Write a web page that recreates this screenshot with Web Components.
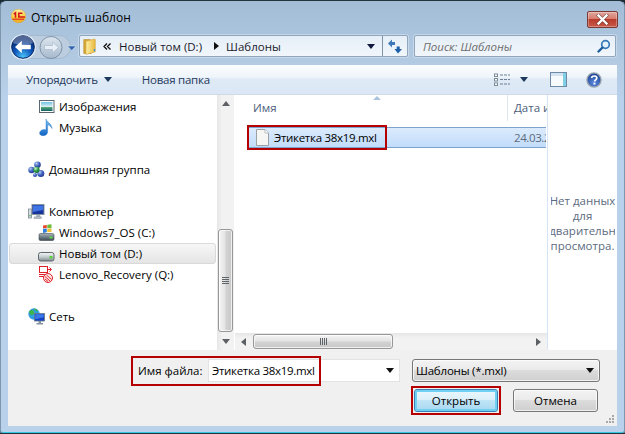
<!DOCTYPE html>
<html>
<head>
<meta charset="utf-8">
<title>Открыть шаблон</title>
<style>
  html, body { margin: 0; padding: 0; background: #1b2a33; }
</style>
</head>
<body>
<open-dialog>
  <dlg-titlebar slot="title">Открыть шаблон</dlg-titlebar>
  <dlg-navbar slot="nav"></dlg-navbar>
  <dlg-toolbar slot="tools"></dlg-toolbar>
  <nav-tree slot="tree">
    <tree-item level="2"><svg slot="icon" width="17" height="15" viewBox="0 0 17 15"><defs><linearGradient id="pic" x1="0" y1="0" x2="0" y2="1"><stop offset="0" stop-color="#6fbfe4"/><stop offset=".5" stop-color="#d8f0f4"/><stop offset=".58" stop-color="#58a878"/><stop offset="1" stop-color="#0f6468"/></linearGradient></defs><rect x="1.500" y="1.500" width="14.500" height="12" fill="#fff" stroke="#5c6670"/><rect x="3" y="3" width="11.500" height="9" fill="url(#pic)"/></svg>Изображения</tree-item>
    <tree-item level="2"><svg slot="icon" width="17" height="17" viewBox="0 0 17 17"><defs><linearGradient id="nt" x1="0" y1="0" x2="0" y2="1"><stop offset="0" stop-color="#7cc6f4"/><stop offset="1" stop-color="#0f62c4"/></linearGradient></defs><path d="M8 0c.3 3 5.500 4 6 9.500-1-2.300-3.200-3.500-4.400-3.700V13c0 2.200-2.200 3.800-4.600 3.800-1.900 0-3.400-1-3.400-2.700 0-2 2.300-3.600 4.600-3.600.8 0 1.400.2 1.800.4z" fill="url(#nt)" stroke="#1a6cc4" stroke-width=".4"/></svg>Музыка</tree-item>
    <tree-item level="1" class="gap"><svg slot="icon" width="17" height="17" viewBox="0 0 17 17"><defs><radialGradient id="sb" cx=".35" cy=".3" r=".8"><stop offset="0" stop-color="#b8cdf4"/><stop offset=".5" stop-color="#3f62c0"/><stop offset="1" stop-color="#1b2f80"/></radialGradient><radialGradient id="sg" cx=".35" cy=".3" r=".8"><stop offset="0" stop-color="#c4f0c4"/><stop offset=".5" stop-color="#2fa048"/><stop offset="1" stop-color="#0f6428"/></radialGradient></defs><circle cx="3.500" cy="9" r="3.200" fill="url(#sb)"/><circle cx="9.500" cy="3.800" r="3.300" fill="url(#sb)"/><circle cx="12.800" cy="12.600" r="3.500" fill="url(#sb)"/><circle cx="7" cy="14" r="2" fill="url(#sb)"/><circle cx="8.500" cy="8.800" r="3.100" fill="url(#sg)"/></svg>Домашняя группа</tree-item>
    <tree-item level="1" class="gap"><svg slot="icon" width="17" height="17" viewBox="0 0 17 17"><rect x=".5" y="6" width="3" height="9" fill="#d4dbe1" stroke="#6f7c88" stroke-width=".7"/><rect x="1.300" y="12" width="1.400" height="1.400" fill="#48b848"/><rect x="4" y="1.500" width="12" height="10" fill="#17349c" stroke="#8592a0"/><path d="M5 2.500h10v4.500L5 9z" fill="#3f74e4"/><path d="M8.500 12h3.500l.8 2H7.700z" fill="#a9b4be"/><rect x="6" y="14" width="7.500" height="1.500" fill="#c8d0d8" stroke="#7c8894" stroke-width=".5"/></svg>Компьютер</tree-item>
    <tree-item level="2"><svg slot="icon" width="17" height="17" viewBox="0 0 17 17"><defs><linearGradient id="hw" x1="0" y1="0" x2="0" y2="1"><stop offset="0" stop-color="#a8b4bc"/><stop offset=".45" stop-color="#74838c"/><stop offset="1" stop-color="#3f4c54"/></linearGradient></defs><rect x="1" y="9.500" width="15" height="7" rx="1.500" fill="url(#hw)" stroke="#3f4a52" stroke-width=".6"/><rect x="11.500" y="12.500" width="3" height="2" fill="#62d24c"/><path d="M5 1.500l3.800-.6v3.400H5z" fill="#e5482c"/><path d="M9.300 .8l4.200-.6v4H9.300z" fill="#6fbb3a"/><path d="M5 4.800h3.800v3.500L5 8.900z" fill="#2f7fe0"/><path d="M9.300 4.800h4.200v3l-4.200.5z" fill="#f2c22c"/></svg>Windows7_OS (C:)</tree-item>
    <tree-item level="2" selected><svg slot="icon" width="17" height="17" viewBox="0 0 17 17"><defs><linearGradient id="hd" x1="0" y1="0" x2="0" y2="1"><stop offset="0" stop-color="#f4f6f6"/><stop offset=".5" stop-color="#c6ced0"/><stop offset="1" stop-color="#7f8a8e"/></linearGradient></defs><rect x=".5" y="7.500" width="15.500" height="8.500" rx="2.200" fill="url(#hd)" stroke="#5f686c"/><rect x="11.500" y="11" width="3" height="2.500" fill="#5ad03c"/></svg>Новый том (D:)</tree-item>
    <tree-item level="2"><svg slot="icon" width="17" height="17" viewBox="0 0 17 17" fill="none" stroke="#de2028"><rect x="1.500" y=".5" width="8" height="6" fill="#fff"/><path d="M1 8.500h10M1 10.500h7"/><path d="M9.500 3.500h3.500M11.500 1.500l2 2-2 2"/><circle cx="10" cy="12" r="4.500" fill="#fde8e8"/><path d="M7 10.500l5 4.500M8.500 9l5 4.500M7 13l3 2.500"/></svg>Lenovo_Recovery (Q:)</tree-item>
    <tree-item level="1" class="gap"><svg slot="icon" width="17" height="17" viewBox="0 0 17 17"><circle cx="6" cy="6" r="5.700" fill="#2f9ee0"/><path d="M1.500 3C3 1.500 5 2 6 3.500S5 7 3.500 7 .800 4.500 1.500 3zM6 .6c2 0 3.500 1 3.800 2.300S7 3 6 .6z" fill="#3db548"/><rect x="6.500" y="5.500" width="10" height="7.500" fill="#1241c8" stroke="#6a7a88" stroke-width=".8"/><path d="M7.300 6.300h8.400v3l-8.400 2z" fill="#3a78e8"/><path d="M10.500 13h2.500v2h2v1.500H8.500V15h2z" fill="#8795a2"/></svg>Сеть</tree-item>
  </nav-tree>
  <scroll-bar slot="treescroll" orient="v" before="117" size="103"></scroll-bar>
  <file-list slot="files"></file-list>
  <preview-pane slot="preview">Нет данных<br>для<br>дварительн<br>просмотра.</preview-pane>
  <dlg-footer slot="footer"></dlg-footer>
</open-dialog>

<script>
const FONT = '"Open Sans", "Noto Sans", sans-serif';

class OpenDialog extends HTMLElement {
  connectedCallback() {
    this.attachShadow({ mode: 'open' }).innerHTML = `
    <style>
      :host {
        display: flex; flex-direction: column; box-sizing: border-box;
        width: 625px; height: 434px; padding: 0 7px 6px;
        border: 1px solid #22353f; border-left-color: #7f97ac; border-right-color: #7f97ac;
        border-radius: 6px 6px 3px 3px;
        box-shadow: inset 0 -1px 0 #35c8e0;
        background: linear-gradient(#a3bdd7 0, #b2cae2 60px, #b9d1ea 100px, #b9d1ea 100%);
        font: 11.5px ${FONT}; color: #000;
      }
      .content {
        display: grid; grid-template-columns: 209px 17px 1px 312px 1px 69px;
        height: 255px; background: #fff;
      }
      .line { background: #fff; }
      .split { background: #d6e5f5; }
    </style>
    <slot name="title"></slot>
    <slot name="nav"></slot>
    <slot name="tools"></slot>
    <div class="content">
      <slot name="tree"></slot>
      <slot name="treescroll"></slot>
      <div class="line"></div>
      <slot name="files"></slot>
      <div class="split"></div>
      <slot name="preview"></slot>
    </div>
    <slot name="footer"></slot>`;
  }
}

class DlgTitlebar extends HTMLElement {
  connectedCallback() {
    this.attachShadow({ mode: 'open' }).innerHTML = `
    <style>
      :host { display: flex; align-items: center; height: 30px; padding-left: 3px; font-size: 12px; }
      svg { margin-right: 5px; }
      .label { flex: 1; padding-top: 2px; }
      .close {
        display: flex; align-items: center; justify-content: center;
        box-sizing: border-box; width: 31px; height: 17px; margin: 6px -1px 0 0;
        border: 1px solid #7a3a34; border-radius: 2px;
        background: linear-gradient(#e0a79e 0, #d87c6e 45%, #b83c2c 50%, #c85a48 100%);
        box-shadow: inset 0 0 0 1px rgba(255,255,255,.3);
      }
    </style>
    <svg width="15" height="14" viewBox="0 0 15 14">
      <defs><linearGradient id="oc" x1="0" y1="0" x2="0" y2="1"><stop offset="0" stop-color="#fff2a8"/><stop offset=".6" stop-color="#f8cc3c"/><stop offset="1" stop-color="#f0a820"/></linearGradient></defs>
      <ellipse cx="7.500" cy="7" rx="7.300" ry="6.800" fill="url(#oc)" stroke="#dca428" stroke-width=".5"/>
      <path d="M2.700 5.200l1.800-1.400v5" fill="none" stroke="#d8141c" stroke-width="1.500"/>
      <path d="M11.500 4.300H7.800v3.800H14" fill="none" stroke="#d8141c" stroke-width="1.500"/>
      <path d="M1.500 10.200h11.500" stroke="#d8141c" stroke-width="1"/>
    </svg>
    <span class="label"><slot></slot></span>
    <div class="close">
      <svg style="margin:0" width="13" height="11" viewBox="0 0 13 11"><path d="M2.500 1.500l8 8M10.500 1.500l-8 8" stroke="#4b2a28" stroke-width="3.600" stroke-linecap="square" opacity=".6"/><path d="M2.500 1.500l8 8M10.500 1.500l-8 8" stroke="#fff" stroke-width="2.400" stroke-linecap="square"/></svg>
    </div>`;
  }
}

class DlgNavbar extends HTMLElement {
  connectedCallback() {
    this.attachShadow({ mode: 'open' }).innerHTML = `
    <style>
      :host { display: flex; align-items: flex-start; height: 34px; margin-left: 1px; color: #1a1a2a; }
      .nav { margin-top: 1px; width: 70px; height: 30px; flex: none; }
      .box {
        display: flex; align-items: center; box-sizing: border-box; height: 22px; margin-top: 4px;
        background: linear-gradient(rgba(236,243,250,.9), rgba(246,250,253,.92));
        border: 1px solid #8fa6bd; border-radius: 2px;
        box-shadow: 0 0 0 1px rgba(255,255,255,.3);
      }
      .addr { width: 329px; padding-left: 3px; }
      .addr svg { flex: none; }
      .chev { margin: 0 8px 0 7px; width: 8px; }
      .tri { margin: 0 7px 0 12px; }
      .space { flex: 1; }
      .sep { width: 1px; align-self: stretch; background: #7f93a8; margin-left: 7px; }
      .refresh { width: 24px; display: flex; justify-content: center; }
      .search { width: 202px; margin-left: 6px; padding: 0 4px 0 8px; color: #6d6d6d; font-style: italic; }
      .search span { flex: 1; }
    </style>
    <svg class="nav" viewBox="0 0 70 30">
      <defs>
        <radialGradient id="bk" cx=".5" cy=".95" r=".85"><stop offset="0" stop-color="#4cc8fa"/><stop offset=".5" stop-color="#0f56bc"/><stop offset="1" stop-color="#062468"/></radialGradient>
        <linearGradient id="fw" x1="0" y1="0" x2="0" y2="1"><stop offset="0" stop-color="#dde6ef"/><stop offset="1" stop-color="#a6b9cd"/></linearGradient>
      </defs>
      <path d="M14 3.500h36a11.500 11.500 0 0 1 0 23H14z" fill="#bccde0" stroke="#9bb0c5" stroke-width=".6"/>
      <circle cx="14" cy="15" r="13" fill="#e8f1fa" opacity=".75"/>
      <circle cx="14" cy="15" r="11.300" fill="url(#bk)" stroke="#0a2a68"/>
      <path d="M4 11a10 7.500 0 0 1 20 0c-4 2-16 2-20 0z" fill="#fff" opacity=".3"/>
      <path d="M6 15l6.800-6.200v4h9v4.400h-9v4z" fill="#fff"/>
      <circle cx="42" cy="15.500" r="11" fill="url(#fw)" stroke="#7f93a8"/>
      <path d="M49.500 15.500l-6-5.400v3.400h-8v4h8v3.400z" fill="#e8eff6" stroke="#a4b6c8" stroke-width=".6"/>
      <path d="M58.500 14h8.500l-4.250 4.500z" fill="#2f62ac" stroke="#d8e6f4" stroke-width=".6"/>
    </svg>
    <div class="box addr">
      <svg width="13" height="17" viewBox="0 0 13 17"><defs><linearGradient id="fd" x1="0" y1="0" x2="1" y2="0"><stop offset="0" stop-color="#fff0a8"/><stop offset="1" stop-color="#e8b83c"/></linearGradient></defs><path d="M.7 1.500h6.500l1 1v13H.7z" fill="#d8a838" stroke="#b08428" stroke-width=".5"/><path d="M3 3.300l8.500-2.300.8.500v12.300l-9.300 2.700z" fill="url(#fd)" stroke="#c8982c" stroke-width=".5"/><rect x="10.800" y="11" width="1.300" height="2.200" fill="#3a8fd8"/></svg>
      <svg class="chev" width="8" height="7" viewBox="0 0 8 7"><path d="M4 .5L1 3.500l3 3M7.500 .5l-3 3 3 3" fill="none" stroke="#111" stroke-width="1.300"/></svg>
      <span>Новый том (D:)</span>
      <svg class="tri" width="5" height="8" viewBox="0 0 5 8"><path d="M0 0l5 4-5 4z" fill="#111"/></svg>
      <span>Шаблоны</span>
      <span class="space"></span>
      <svg width="8" height="5" viewBox="0 0 8 5"><path d="M0 0h8L4 5z" fill="#101840"/></svg>
      <div class="sep"></div>
      <div class="refresh"><svg width="16" height="15" viewBox="0 0 16 15"><path d="M1 4.500l4-4v2.500h3v3H5v2.500z" fill="#3f78b8"/><path d="M15 10l-4 4.500-3.500-4.500h2.200V7.500h3V10z" fill="#1f5fa8"/></svg></div>
    </div>
    <div class="box search">
      <span>Поиск: Шаблоны</span>
      <svg width="14" height="14" viewBox="0 0 14 14"><circle cx="8.500" cy="5.500" r="3.800" fill="#e6f2fb" stroke="#3779b8" stroke-width="1.700"/><path d="M5.500 8.500L1.500 12.500" stroke="#1f5d9c" stroke-width="2.400" stroke-linecap="round"/></svg>
    </div>`;
  }
}

class DlgToolbar extends HTMLElement {
  connectedCallback() {
    this.attachShadow({ mode: 'open' }).innerHTML = `
    <style>
      :host {
        display: flex; align-items: center; height: 30px; padding-left: 18px; flex: none; box-sizing: border-box;
        background: linear-gradient(#fbfdfe 0, #eff5fb 40%, #dfeaf6 50%, #dbe7f5 100%);
        border-bottom: 1px solid #cfdbe9; color: #1e395b;
      }
      .tight { letter-spacing: -.25px; }
      .arr { margin: 0 30px 0 6px; }
      .space { flex: 1; }
      svg { flex: none; }
    </style>
    <span class="tight">Упорядочить</span>
    <svg class="arr" width="8" height="5" viewBox="0 0 8 5"><path d="M0 0h8L4 5z" fill="#1e395b"/></svg>
    <span class="tight">Новая папка</span>
    <span class="space"></span>
    <svg width="16" height="13" viewBox="0 0 16 13" fill="none"><rect x=".5" y="1" width="3" height="2.500" fill="#fff" stroke="#7d8a98"/><rect x=".5" y="5.500" width="3" height="2.500" fill="#fff" stroke="#7d8a98"/><rect x=".5" y="10" width="3" height="2.500" fill="#fff" stroke="#7d8a98"/><path d="M6 2h10M6 6.500h10M6 11h10" stroke="#6c7e92" stroke-dasharray="3 1"/></svg>
    <svg style="margin:0 22px 0 10px" width="8" height="5" viewBox="0 0 8 5"><path d="M0 0h8L4 5z" fill="#1e395b"/></svg>
    <svg style="margin-right:19px" width="17" height="15" viewBox="0 0 17 15"><rect x=".5" y=".5" width="16" height="14" fill="#f6fafd" stroke="#6f8aa6"/><rect x="1" y="1" width="15" height="3" fill="#d5e3f0"/><rect x="13" y="1" width="3" height="13" fill="#7fd0e4"/></svg>
    <svg style="margin-right:15px" width="16" height="16" viewBox="0 0 17 17"><defs><radialGradient id="hp" cx=".5" cy=".7" r=".7"><stop offset="0" stop-color="#5b8ae0"/><stop offset="1" stop-color="#1b3f90"/></radialGradient></defs><circle cx="8.500" cy="8.500" r="7.500" fill="url(#hp)" stroke="#9aa5b0" stroke-width="1.400"/><path d="M6 6.500c0-3 5.500-3 5.500 0 0 2-2.300 1.800-2.300 3.600" fill="none" stroke="#fff" stroke-width="1.800"/><rect x="8" y="11.300" width="2" height="2" fill="#fff"/></svg>`;
  }
}

class NavTree extends HTMLElement {
  connectedCallback() {
    this.attachShadow({ mode: 'open' }).innerHTML = `
    <style>
      :host { display: block; padding: 1px 1px 0; overflow: hidden; }
      ::slotted(.gap) { margin-top: 21px; }
    </style>
    <slot></slot>`;
  }
}

class TreeItem extends HTMLElement {
  connectedCallback() {
    const indent = this.getAttribute('level') === '2' ? 28 : 18;
    this.attachShadow({ mode: 'open' }).innerHTML = `
    <style>
      :host {
        display: flex; align-items: center; box-sizing: border-box; height: 21px;
        padding-left: ${indent}px; border: 1px solid transparent; border-radius: 3px;
      }
      :host([selected]) {
        border-color: #d9d9d9;
        background: linear-gradient(#f7f7f7, #e5e5e5);
      }
      .icon { display: flex; width: 21px; flex: none; }
    </style>
    <span class="icon"><slot name="icon"></slot></span>
    <span><slot></slot></span>`;
  }
}

class ScrollBar extends HTMLElement {
  connectedCallback() {
    const v = this.getAttribute('orient') === 'v';
    const before = this.getAttribute('before');
    const size = this.getAttribute('size');
    const lines = v
      ? '<path d="M0 .5h7M0 2.500h7M0 4.500h7M0 6.500h7" stroke="#5f6468"/>'
      : '<path d="M.5 0v7M2.500 0v7M4.500 0v7M6.500 0v7" stroke="#5f6468"/>';
    const arrowA = v ? 'M0 5h8L4 0z' : 'M5 0v8L0 4z';
    const arrowB = v ? 'M0 0h8L4 5z' : 'M0 0v8l5-4z';
    const aSize = v ? 'width="8" height="5"' : 'width="5" height="8"';
    this.attachShadow({ mode: 'open' }).innerHTML = `
    <style>
      :host {
        display: flex; flex-direction: ${v ? 'column' : 'row'};
        background: ${v ? 'linear-gradient(90deg,#e6e6e6,#f2f2f2 30%,#f2f2f2)' : 'linear-gradient(#e6e6e6,#f2f2f2 30%,#f2f2f2)'};
      }
      .arrow { display: flex; align-items: center; justify-content: center; flex: none; ${v ? 'height: 17px' : 'width: 17px'}; }
      .before { flex: none; ${v ? 'height' : 'width'}: ${before}px; }
      .thumb {
        display: flex; align-items: center; justify-content: center; flex: none; box-sizing: border-box;
        ${v ? `height: ${size}px; margin: 0 1px` : `width: ${size}px; margin: 1px 0`};
        border: 1px solid #979797; border-radius: 3px;
        background: linear-gradient(${v ? '90deg' : '180deg'}, #f4f4f4, #e4e4e4 45%, #d2d2d2 55%, #c8c8c8);
        box-shadow: inset 0 0 0 1px rgba(255,255,255,.7);
      }
      .rest { flex: 1; }
    </style>
    <div class="arrow"><svg ${aSize}><path d="${arrowA}" fill="#5d6064"/></svg></div>
    <div class="before"></div>
    <div class="thumb"><svg width="7" height="7">${lines}</svg></div>
    <div class="rest"></div>
    <div class="arrow"><svg ${aSize}><path d="${arrowB}" fill="#5d6064"/></svg></div>`;
  }
}

class RedMark extends HTMLElement {
  connectedCallback() {
    this.attachShadow({ mode: 'open' }).innerHTML = `
    <style>
      :host { display: block; position: absolute; box-sizing: border-box; border: 2px solid #b40000; pointer-events: none; }
    </style>`;
  }
}

class FileList extends HTMLElement {
  connectedCallback() {
    this.attachShadow({ mode: 'open' }).innerHTML = `
    <style>
      :host { display: flex; flex-direction: column; min-width: 0; overflow: hidden; }
      .head { position: relative; display: flex; flex: none; height: 26px; color: #4c607a; }
      .name { width: 254px; padding-left: 18px; border-right: 1px solid #dde6f0; line-height: 26px; }
      .date { padding-left: 6px; white-space: nowrap; overflow: hidden; width: 33px; line-height: 26px; }
      .sort { position: absolute; left: 138px; top: 1px; }
      .body { flex: 1; padding: 6px 1px 0 13px; }
      .row {
        position: relative; display: flex; align-items: center; box-sizing: border-box; height: 21px;
        padding-left: 7px; border: 1px solid #7da2ce; border-right: none;
        background: linear-gradient(#dcebfc, #c1dcfb);
      }
      .row svg { margin-right: 5px; flex: none; }
      .fname { width: 240px; flex: none; letter-spacing: -.3px; }
      .fdate { color: #5d6b7a; white-space: nowrap; overflow: hidden; letter-spacing: -.4px; }
      red-mark { top: -3px; left: -2px; width: 140px; height: 25px; }
      scroll-bar { height: 17px; flex: none; }
    </style>
    <div class="head">
      <div class="name">Имя</div>
      <div class="date">Дата и</div>
      <svg class="sort" width="8" height="4" viewBox="0 0 8 4"><path d="M0 4h8L4 0z" fill="#a9c4dc"/></svg>
    </div>
    <div class="body">
      <div class="row">
        <svg width="13" height="17" viewBox="0 0 13 17"><path d="M.5 .5h8.500l3.500 3.500v12.500H.5z" fill="#f6f6f4" stroke="#9aa0a4"/><path d="M9 .5v3.500h3.500" fill="#fff" stroke="#b8bcc0"/></svg>
        <span class="fname">Этикетка 38x19.mxl</span>
        <span class="fdate">24.03.2</span>
        <red-mark></red-mark>
      </div>
    </div>
    <scroll-bar orient="h" before="1" size="140"></scroll-bar>`;
  }
}

class PreviewPane extends HTMLElement {
  connectedCallback() {
    this.attachShadow({ mode: 'open' }).innerHTML = `
    <style>
      :host {
        display: flex; align-items: center; justify-content: center; overflow: hidden;
        text-align: center; color: #5c6b80; line-height: 15px; white-space: nowrap;
      }
      .inner { width: 64px; display: flex; justify-content: center; margin-top: 1px; overflow: hidden; }
      .text { flex: none; }
    </style>
    <div class="inner"><div class="text"><slot></slot></div></div>`;
  }
}

class ComboBox extends HTMLElement {
  connectedCallback() {
    this.attachShadow({ mode: 'open' }).innerHTML = `
    <style>
      :host { display: flex; align-items: center; box-sizing: border-box; height: 23px; padding: 0 5px 0 3px; }
      :host([edit]) { background: #fff; border: 1px solid #e3e3e3; letter-spacing: -.3px; }
      :host([select]) {
        border: 1px solid #777; border-radius: 3px; letter-spacing: -.2px;
        background: linear-gradient(#f3f3f3, #ebebeb 45%, #dcdcdc 50%, #cfcfcf);
        box-shadow: inset 0 0 0 1px rgba(255,255,255,.7);
      }
      span { flex: 1; white-space: nowrap; }
    </style>
    <span><slot></slot></span>
    <svg width="8" height="5" viewBox="0 0 8 5"><path d="M0 0h8L4 5z" fill="#111"/></svg>`;
  }
}

class DlgButton extends HTMLElement {
  connectedCallback() {
    this.attachShadow({ mode: 'open' }).innerHTML = `
    <style>
      :host {
        position: relative; display: flex; align-items: center; justify-content: center; box-sizing: border-box; height: 23px;
        border: 1px solid #777; border-radius: 3px;
        background: linear-gradient(#f3f3f3, #ebebeb 45%, #dcdcdc 50%, #cfcfcf);
        box-shadow: inset 0 0 0 1px rgba(255,255,255,.7);
      }
      :host([primary]) {
        border-color: #3c7fb1;
        background: linear-gradient(#ebf7fd, #dcf0fa 45%, #bfe4f6 50%, #a7d8f0);
        box-shadow: inset 0 0 0 2px #6fd0f4;
      }
      ::slotted(red-mark) { inset: -4px; }
    </style>
    <slot></slot>`;
  }
}

class DlgFooter extends HTMLElement {
  connectedCallback() {
    this.attachShadow({ mode: 'open' }).innerHTML = `
    <style>
      :host {
        position: relative; display: flex; flex-direction: column; gap: 7px; box-sizing: border-box;
        height: 76px; padding-top: 9px; background: #f0f0f0; flex: none;
      }
      .row { display: flex; }
      .first { align-items: center; padding-left: 130px; }
      .lab { width: 70px; flex: none; }
      .edit { width: 192px; flex: none; }
      .filter { width: 188px; flex: none; margin-left: 12px; }
      .second { padding-left: 406px; gap: 15px; }
      .ok { width: 84px; }
      .no { width: 85px; }
      .mark { top: 6px; left: 123px; width: 190px; height: 30px; }
      .grip { position: absolute; right: 3px; bottom: 2px; }
    </style>
    <div class="row first">
      <span class="lab">Имя файла:</span>
      <combo-box class="edit" edit>Этикетка 38x19.mxl</combo-box>
      <combo-box class="filter" select>Шаблоны (*.mxl)</combo-box>
    </div>
    <div class="row second">
      <dlg-button class="ok" primary>Открыть<red-mark></red-mark></dlg-button>
      <dlg-button class="no">Отмена</dlg-button>
    </div>
    <red-mark class="mark"></red-mark>
    <svg class="grip" width="9" height="9" viewBox="0 0 9 9" fill="#a8a8a8"><rect x="7" y="0" width="2" height="2"/><rect x="4" y="3" width="2" height="2"/><rect x="7" y="3" width="2" height="2"/><rect x="1" y="6" width="2" height="2"/><rect x="4" y="6" width="2" height="2"/><rect x="7" y="6" width="2" height="2"/></svg>`;
  }
}

customElements.define('open-dialog', OpenDialog);
customElements.define('dlg-titlebar', DlgTitlebar);
customElements.define('dlg-navbar', DlgNavbar);
customElements.define('dlg-toolbar', DlgToolbar);
customElements.define('nav-tree', NavTree);
customElements.define('tree-item', TreeItem);
customElements.define('scroll-bar', ScrollBar);
customElements.define('red-mark', RedMark);
customElements.define('file-list', FileList);
customElements.define('preview-pane', PreviewPane);
customElements.define('combo-box', ComboBox);
customElements.define('dlg-button', DlgButton);
customElements.define('dlg-footer', DlgFooter);
</script>
</body>
</html>
